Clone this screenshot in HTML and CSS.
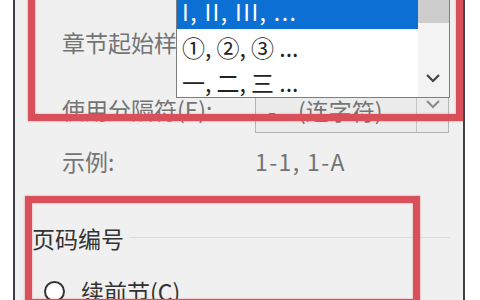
FILE: index.html
```html
<!DOCTYPE html>
<html lang="zh-CN">
<head>
  <meta charset="UTF-8" />
  <meta name="viewport" content="width=device-width, initial-scale=1.0"/>
  <title>页码格式</title>
  <link rel="stylesheet" href="styles.css">
</head>
<body>
  <div class="dialog">
    <div class="row">
      <span class="label">章节起始样式(P):</span>
      <div class="combo">
        <span class="value"></span>
        <span class="btn"><svg width="14" height="9" viewBox="0 0 14 9"><path d="M1 1 L7 7 L13 1" fill="none" stroke="#8a8a8a" stroke-width="2"/></svg></span>
      </div>
    </div>
    <div class="row">
      <span class="label">使用分隔符(E):</span>
      <div class="combo">
        <span class="value"><span class="dash">-</span>(连字符)</span>
        <span class="btn"><svg width="14" height="9" viewBox="0 0 14 9"><path d="M1 1 L7 7 L13 1" fill="none" stroke="#8a8a8a" stroke-width="2"/></svg></span>
      </div>
    </div>
    <div class="row short">
      <span class="label">示例:</span>
      <span class="value latin">1-1, 1-A</span>
    </div>

    <div class="group">
      <span class="group-title">页码编号</span>
      <span class="rule"></span>
    </div>
    <label class="radio"><span class="circle"></span>续前节(C)</label>

    <!-- open list of the first combo -->
    <div class="popup">
      <ul class="options">
        <li class="selected latin">I, II, III, ...</li>
        <li>①, ②, ③ ...</li>
        <li>一, 二, 三 ...</li>
      </ul>
      <div class="scrollbar">
        <div class="thumb"></div>
        <svg class="down" width="14" height="9" viewBox="0 0 14 9"><path d="M1 1 L7 7 L13 1" fill="none" stroke="#444" stroke-width="2.2"/></svg>
      </div>
    </div>
  </div>

  <div class="mark mark-top"></div>
  <div class="mark mark-bottom"></div>
</body>
</html>
```

FILE: styles.css
```css
body {
  margin: 0;
  width: 480px;
  height: 300px;
  overflow: hidden;
  position: relative;
  background: #fff;
  font-family: "Noto Sans CJK SC", "Noto Sans", sans-serif;
  font-size: 23px;
  color: #333;
}

.dialog {
  position: relative;
  margin-left: 13px;
  width: 448px;
  height: 283px;
  overflow: hidden;
  border-left: 2px solid #3c3f48;
  border-right: 2px solid #3c3f48;
  background: #f0f0f0;
  padding-top: 17px;
}

.row {
  display: grid;
  grid-template-columns: 193px 194px;
  align-items: center;
  height: 49px;
  padding-left: 47px;
  margin-bottom: 18px;
}

.row.short {
  height: 30px;
  margin-top: -7px;
}

.label,
.value {
  color: #747474;
  white-space: nowrap;
}

.latin {
  letter-spacing: 1.4px;
}

.combo {
  display: flex;
  height: 49px;
  box-sizing: border-box;
  border: 1px solid #b4b4b4;
  background: #ececec;
}

.combo .value {
  flex: 1;
  display: flex;
  align-items: center;
  padding-left: 12px;
  line-height: 1;
  padding-top: 4px;
}

.dash {
  margin-right: 22px;
}

.btn {
  width: 31px;
  border-left: 1px solid #c4c4c4;
  display: flex;
  align-items: center;
  justify-content: center;
  padding-bottom: 8px;
}

.group {
  display: flex;
  align-items: center;
  height: 30px;
  margin-top: 49px;
  padding-left: 17px;
  padding-right: 13px;
}

.group-title {
  color: #333;
}

.rule {
  flex: 1;
  height: 1px;
  background: #dcdcdc;
  margin-left: 5px;
  margin-top: -2px;
}

.radio {
  display: flex;
  align-items: center;
  gap: 16px;
  height: 30px;
  margin-top: 23px;
  padding-left: 29px;
  color: #333;
}

.circle {
  width: 17px;
  height: 17px;
  border: 2px solid #333;
  border-radius: 50%;
  background: #fff;
}

.popup {
  position: absolute;
  left: 161px;
  top: -6px;
  width: 274px;
  height: 104px;
  box-sizing: border-box;
  border: 1px solid #7e7e7e;
  background: #fff;
  display: flex;
}

.options {
  list-style: none;
  margin: 0;
  padding: 0;
  flex: 1;
}

.options li {
  height: 35px;
  line-height: 37px;
  padding-left: 5px;
  white-space: nowrap;
  color: #222;
}

.options li.selected {
  height: 34px;
  line-height: 32px;
  background: #0b6fd3;
  color: #fff;
}

.scrollbar {
  width: 31px;
  background: #f3f3f3;
  position: relative;
}

.thumb {
  height: 28px;
  background: #cdcdcd;
}

.down {
  position: absolute;
  left: 8px;
  bottom: 14px;
}

.mark {
  position: absolute;
  box-sizing: border-box;
  border: 7px solid #d94f5a;
  box-shadow: 0 0 2px rgba(217, 79, 90, 0.6), inset 0 0 2px rgba(217, 79, 90, 0.6);
}

.mark-top {
  left: 28px;
  top: -20px;
  width: 435px;
  height: 141px;
}

.mark-bottom {
  left: 25px;
  top: 196px;
  width: 395px;
  height: 110px;
}
```
